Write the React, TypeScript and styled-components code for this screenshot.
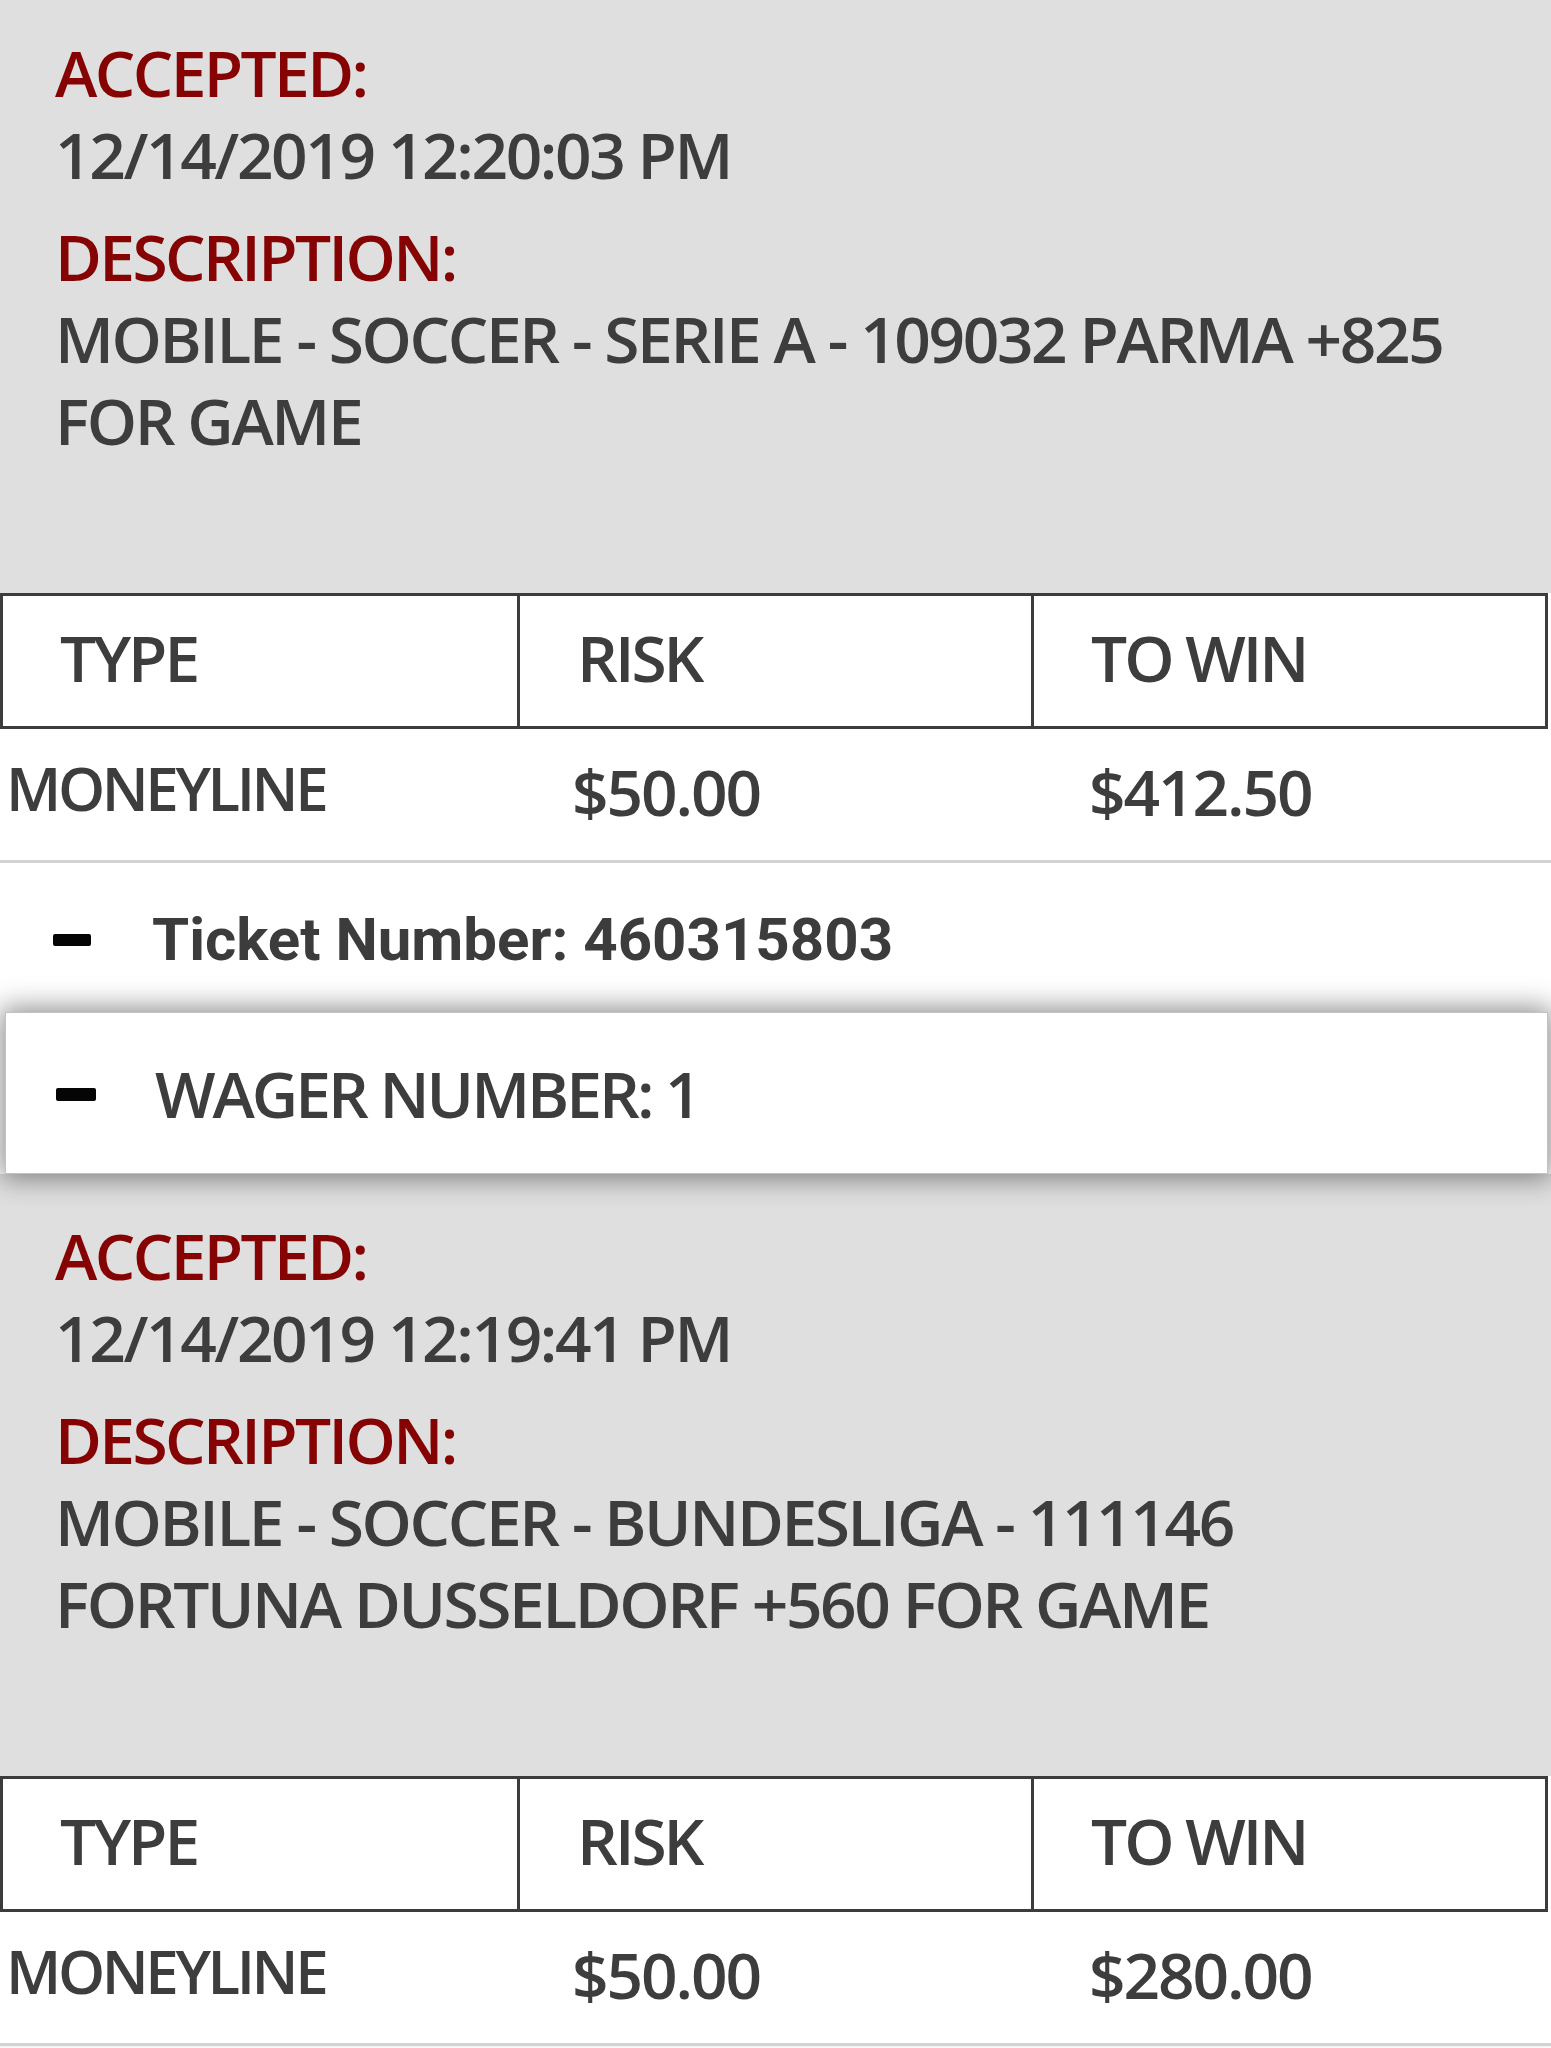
import React from 'react';
import styled, { createGlobalStyle } from 'styled-components';

const GlobalStyle = createGlobalStyle`
  html, body {
    margin: 0;
    padding: 0;
    background: #ffffff;
  }
  body {
    font-family: "Open Sans", "Liberation Sans", sans-serif;
    color: #3d3d3d;
  }
  * {
    box-sizing: border-box;
  }
`;

const Page = styled.main`
  width: 1551px;
  min-height: 2048px;
  display: flex;
  flex-direction: column;
  background: #ffffff;
  overflow: hidden;
`;

const Details = styled.section<{ $top: number }>`
  background: #dfdfdf;
  padding: ${(p) => p.$top}px 60px 131px 55px;
  display: flex;
  flex-direction: column;
  gap: 20px;
`;

const Field = styled.div`
  display: flex;
  flex-direction: column;
  font-size: 64px;
  font-weight: 600;
  line-height: 82px;
`;

const Label = styled.div`
  color: #850303;
  letter-spacing: -2.6px;
`;

const Value = styled.div`
  color: #3d3d3d;
  letter-spacing: -2.4px;
`;

const Table = styled.div`
  display: flex;
  flex-direction: column;
  background: #ffffff;
`;

const HeadRow = styled.div`
  display: grid;
  grid-template-columns: repeat(3, 1fr);
  border: 3px solid #3c3c3c;
  margin-right: 3px;
  background: #ffffff;
`;

const HeadCell = styled.div`
  padding: 21px 20px 27px 57px;
  font-size: 64px;
  font-weight: 600;
  line-height: 82px;
  letter-spacing: -3px;
  color: #3d3d3d;

  & + & {
    border-left: 3px solid #3c3c3c;
  }
`;

const BodyRow = styled.div`
  display: grid;
  grid-template-columns: repeat(3, 1fr);
  padding-bottom: 27px;
  border-bottom: 3px solid #d3d3d3;
  box-shadow: 0 1px 2px rgba(0, 0, 0, 0.08);
  background: #ffffff;
`;

const BodyCell = styled.div<{ $kind: 'type' | 'money' }>`
  color: #3d3d3d;
  font-weight: 600;
  line-height: 82px;
  letter-spacing: ${(p) => (p.$kind === 'type' ? '-3.4px' : '-2.1px')};
  font-size: ${(p) => (p.$kind === 'type' ? '60px' : '64px')};
  padding-top: ${(p) => (p.$kind === 'type' ? '18px' : '22px')};
  padding-left: ${(p) => (p.$kind === 'type' ? '6px' : '55px')};
`;

const Dash = styled.span<{ $w: number; $h: number }>`
  display: block;
  flex: none;
  width: ${(p) => p.$w}px;
  height: ${(p) => p.$h}px;
  border-radius: 2px;
  background: #050505;
`;

const TicketRow = styled.div`
  display: flex;
  align-items: center;
  gap: 61px;
  padding: 46px 0 41px 53px;
  background: #ffffff;
  font-family: Roboto, "Open Sans", sans-serif;
  font-weight: 700;
  font-size: 60px;
  line-height: 62px;
  color: #3c3c3c;
`;

const WagerBox = styled.div`
  position: relative;
  margin: 0 3px 0 5px;
  display: flex;
  align-items: center;
  gap: 59px;
  padding: 40px 0 38px 50px;
  background: #ffffff;
  border: 1px solid #c2c2c2;
  box-shadow: 0 0 26px 4px rgba(0, 0, 0, 0.45);
  font-size: 64px;
  font-weight: 600;
  line-height: 82px;
  letter-spacing: -3px;
  color: #3d3d3d;
`;

type Wager = {
  accepted: string;
  description: string;
  type: string;
  risk: string;
  toWin: string;
};

const BetDetails: React.FC<{ wager: Wager; top: number }> = ({ wager, top }) => (
  <>
    <Details $top={top}>
      <Field>
        <Label>ACCEPTED:</Label>
        <Value>{wager.accepted}</Value>
      </Field>
      <Field>
        <Label>DESCRIPTION:</Label>
        <Value>{wager.description}</Value>
      </Field>
    </Details>
    <Table>
      <HeadRow>
        <HeadCell>TYPE</HeadCell>
        <HeadCell>RISK</HeadCell>
        <HeadCell>TO WIN</HeadCell>
      </HeadRow>
      <BodyRow>
        <BodyCell $kind="type">{wager.type}</BodyCell>
        <BodyCell $kind="money">{wager.risk}</BodyCell>
        <BodyCell $kind="money">{wager.toWin}</BodyCell>
      </BodyRow>
    </Table>
  </>
);

const first: Wager = {
  accepted: '12/14/2019 12:20:03 PM',
  description: 'MOBILE - SOCCER - SERIE A - 109032 PARMA +825 FOR GAME',
  type: 'MONEYLINE',
  risk: '$50.00',
  toWin: '$412.50',
};

const second: Wager = {
  accepted: '12/14/2019 12:19:41 PM',
  description: 'MOBILE - SOCCER - BUNDESLIGA - 111146 FORTUNA DUSSELDORF +560 FOR GAME',
  type: 'MONEYLINE',
  risk: '$50.00',
  toWin: '$280.00',
};

export default function App() {
  return (
    <>
      <GlobalStyle />
      <Page>
        <BetDetails wager={first} top={32} />
        <TicketRow>
          <Dash $w={38} $h={12} />
          <span>Ticket Number: 460315803</span>
        </TicketRow>
        <WagerBox>
          <Dash $w={40} $h={13} />
          <span>WAGER NUMBER: 1</span>
        </WagerBox>
        <BetDetails wager={second} top={41} />
      </Page>
    </>
  );
}
